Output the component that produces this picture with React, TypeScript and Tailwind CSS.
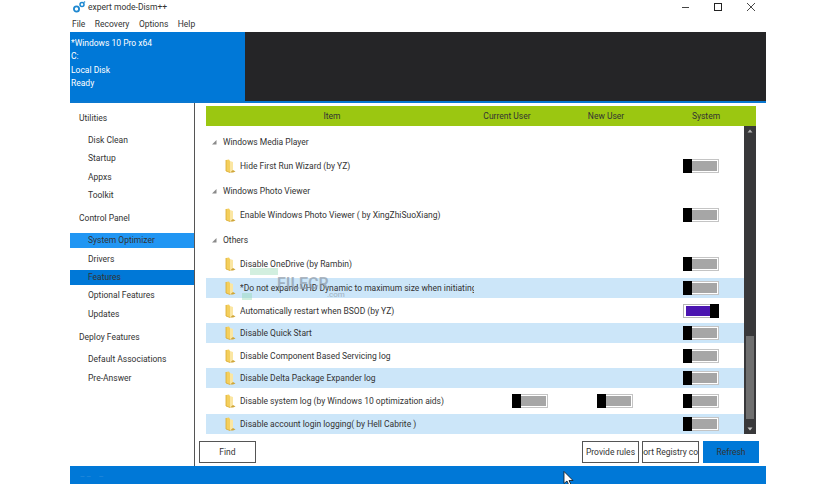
import React from "react";

const font = { fontFamily: 'Roboto, "Noto Sans", sans-serif' };

function Folder() {
  return (
    <svg width="11" height="14" viewBox="0 0 11 14" className="shrink-0">
      <path d="M1 1 L4 0.5 L5 2 L5 13.5 L1 12 Z" fill="#f4cf5d" />
      <path d="M5 2 L8 3 L8 13 L5 13.5 Z" fill="#fbe6a2" />
      <path d="M8 11 L10.5 12.5 L8 13.5 L5 13.5 Z" fill="#cfa63a" />
      <path d="M1 1 L1 12 L5 13.5" fill="none" stroke="#d9a92f" strokeWidth="0.8" />
    </svg>
  );
}

function Toggle({ on }: { on?: boolean }) {
  return on ? (
    <div className="w-[36px] h-[14px] flex items-center border border-[#b5b5b5] bg-white pl-[2px]">
      <div className="flex-1 h-[10px] bg-[#4a14b0]" />
      <div className="w-[9px] h-[14px] bg-black -mr-[1px]" />
    </div>
  ) : (
    <div className="w-[36px] h-[14px] flex items-center border border-[#c4c4c4] bg-white pr-[1px]">
      <div className="w-[9px] h-[14px] bg-black -ml-[1px]" />
      <div className="flex-1 h-[10px] bg-[#a6a6a6]" />
    </div>
  );
}

function Group({ label, h }: { label: string; h: string }) {
  return (
    <div className={`flex items-center pl-[5px] text-[8.5px] text-[#333] ${h}`}>
      <svg width="6" height="6" viewBox="0 0 6 6" className="mr-[6px]">
        <path d="M5.5 1 L5.5 5.5 L1 5.5 Z" fill="#8a8a8a" />
      </svg>
      <span className="pt-[1px]">{label}</span>
    </div>
  );
}

function Row({
  label,
  h,
  alt,
  on,
  users,
}: {
  label: string;
  h: string;
  alt?: boolean;
  on?: boolean;
  users?: boolean;
}) {
  return (
    <div className={`flex items-center text-[8.5px] text-[#333] ${h} ${alt ? "bg-[#cce6f9]" : ""}`}>
      <div className="w-[19px] shrink-0" />
      <Folder />
      <div className="ml-[4px] pt-[1px] w-[234px] shrink-0 whitespace-nowrap overflow-hidden">{label}</div>
      <div className="w-[74px] shrink-0 flex justify-end">{users && <Toggle />}</div>
      <div className="w-[85px] shrink-0 flex justify-end">{users && <Toggle />}</div>
      <div className="w-[86px] shrink-0 flex justify-end">
        <Toggle on={on} />
      </div>
    </div>
  );
}

function NavHead({ label, h }: { label: string; h: string }) {
  return <div className={`flex items-center pl-[9px] text-[8.5px] text-[#333] ${h}`}>{label}</div>;
}

function NavItem({ label, bg }: { label: string; bg?: string }) {
  return (
    <div className={`h-[15.6px] my-[1.4px] flex items-center pl-[18px] text-[8.5px] text-[#333] ${bg ?? ""}`}>
      {label}
    </div>
  );
}

function Btn({ label, w, primary }: { label: string; w: string; primary?: boolean }) {
  return (
    <div
      className={`h-[22px] flex items-center justify-center text-[8.5px] text-[#333] overflow-hidden whitespace-nowrap ${w} ${
        primary ? "bg-[#0078d7] border border-[#0078d7]" : "bg-white border border-[#555]"
      }`}
    >
      {label}
    </div>
  );
}

export default function App() {
  return (
    <div className="w-[836px] h-[484px] bg-white overflow-hidden relative" style={font}>
      <div className="ml-[70px] w-[696px] h-[484px] flex flex-col">
        {/* title bar */}
        <div className="h-[14px] flex items-center relative">
          <svg width="13" height="12" viewBox="0 0 13 12" className="ml-[3px]">
            <circle cx="3.5" cy="8" r="2.6" fill="none" stroke="#1e88d0" strokeWidth="1.8" />
            <circle cx="9" cy="3.5" r="2" fill="none" stroke="#1e88d0" strokeWidth="1.5" />
            <circle cx="11.5" cy="1" r="0.8" fill="#1e88d0" />
          </svg>
          <span className="ml-[2px] text-[8.5px] text-[#333]">expert mode-Dism++</span>
          <svg width="100" height="12" viewBox="0 0 100 12" className="absolute left-[606px] top-[1px]">
            <path d="M6 6.5 H13" stroke="#444" strokeWidth="1" />
            <rect x="38.5" y="2.5" width="7" height="7" fill="none" stroke="#222" strokeWidth="1" />
            <path d="M71 2 L79 10 M79 2 L71 10" stroke="#333" strokeWidth="0.9" />
          </svg>
        </div>
        {/* menu */}
        <div className="h-[18px] pt-[2px] flex items-center gap-[9.5px] pl-[2px] text-[8.5px] text-[#333]">
          <span>File</span>
          <span>Recovery</span>
          <span>Options</span>
          <span>Help</span>
        </div>
        {/* header */}
        <div className="h-[71px] flex border-b-[2px] border-[#0a78d0] shrink-0">
          <div className="w-[175px] bg-[#0078d7] text-white text-[8.5px] pt-[5px] pl-[1px] leading-[13.4px]">
            <div>*Windows 10 Pro x64</div>
            <div>C:</div>
            <div>Local Disk</div>
            <div>Ready</div>
          </div>
          <div className="flex-1 bg-[#252527]" />
        </div>
        {/* body */}
        <div className="flex-1 flex min-h-0">
          {/* sidebar */}
          <div className="w-[125px] border-r border-[#555] shrink-0 pt-[5px]">
            <NavHead label="Utilities" h="h-[21px]" />
            <div className="pt-[2px] flex flex-col">
              <NavItem label="Disk Clean" />
              <NavItem label="Startup" />
              <NavItem label="Appxs" />
              <NavItem label="Toolkit" />
            </div>
            <NavHead label="Control Panel" h="h-[27px]" />
            <div className="flex flex-col">
              <NavItem label="System Optimizer" bg="bg-[#2196f3]" />
              <NavItem label="Drivers" />
              <NavItem label="Features" bg="bg-[#0078d7]" />
              <NavItem label="Optional Features" />
              <NavItem label="Updates" />
            </div>
            <NavHead label="Deploy Features" h="h-[27px]" />
            <div className="flex flex-col">
              <NavItem label="Default Associations" />
              <NavItem label="Pre-Answer" />
            </div>
          </div>
          {/* main */}
          <div className="flex-1 flex flex-col min-w-0 pl-[11px] pr-[10px] pt-[3px]">
            <div className="h-[20px] bg-[#9bc711] flex items-center text-[8.5px] text-[#333] shrink-0">
              <div className="w-[252px] text-center">Item</div>
              <div className="w-[98px] text-center">Current User</div>
              <div className="w-[100px] text-center">New User</div>
              <div className="w-[100px] text-center">System</div>
            </div>
            <div className="flex h-[308px] shrink-0">
              <div className="flex-1 min-w-0 pt-[2px]">
                <Group label="Windows Media Player" h="h-[28px]" />
                <Row label="Hide First Run Wizard (by YZ)" h="h-[20px]" />
                <Group label="Windows Photo Viewer" h="h-[29px]" />
                <Row label="Enable Windows Photo Viewer ( by XingZhiSuoXiang)" h="h-[20px]" />
                <Group label="Others" h="h-[29px]" />
                <Row label="Disable OneDrive (by Rambin)" h="h-[20px] mb-[4px]" />
                <Row label="*Do not expand VHD Dynamic to maximum size when initiating" h="h-[20px]" alt />
                <Row label="Automatically restart when BSOD (by YZ)" h="h-[25px]" on />
                <Row label="Disable Quick Start" h="h-[20px]" alt />
                <Row label="Disable Component Based Servicing log" h="h-[25px]" />
                <Row label="Disable Delta Package Expander log" h="h-[20px]" alt />
                <Row label="Disable system log (by Windows 10 optimization aids)" h="h-[25px] mb-[1px]" users />
                <Row label="Disable account login logging( by Hell Cabrite )" h="h-[20px]" alt />
              </div>
              <div className="w-[12px] bg-[#38383a] flex flex-col items-center shrink-0 relative">
                <svg width="8" height="8" viewBox="0 0 8 8" className="mt-[1px]">
                  <path d="M1.5 5.5 L4 2.5 L6.5 5.5 Z" fill="#b5b5b5" />
                </svg>
                <div className="absolute left-[2px] right-[2px] top-[210px] bottom-[15px] bg-[#6f6f6f]" />
                <svg width="8" height="8" viewBox="0 0 8 8" className="absolute bottom-[1px]">
                  <path d="M1.5 2.5 L4 5.5 L6.5 2.5 Z" fill="#c5c5c5" />
                </svg>
              </div>
            </div>
            <div className="flex items-start pt-[7px] h-[32px] -ml-[7px] -mr-[3px]">
              <Btn label="Find" w="w-[57px]" />
              <div className="flex-1" />
              <div className="flex">
                <Btn label="Provide rules" w="w-[57px]" />
                <div className="h-[22px] w-[57px] ml-[3px] bg-white border border-[#555] flex items-center justify-center overflow-hidden whitespace-nowrap text-[8.5px] text-[#333]">
                  Import Registry config
                </div>
                <div className="ml-[4px]">
                  <Btn label="Refresh" w="w-[56px]" primary />
                </div>
              </div>
            </div>
          </div>
        </div>
        {/* status */}
        <div className="h-[18px] bg-[#0078d7] shrink-0 flex items-center pl-[10px] gap-[8px] text-[6px] text-[#3d95dc]">
          <span>— —</span>
          <span>—</span>
        </div>
      </div>

      {/* watermark */}
      <div className="absolute left-[277px] top-[276px] text-[16px] leading-[16px] font-semibold text-[#8c9aa8] opacity-70 pointer-events-none">
        FILECR
      </div>
      <div className="absolute left-[327px] top-[290px] text-[8px] leading-[9px] text-[#8c9aa8] opacity-70 pointer-events-none">
        .com
      </div>
      <div className="absolute left-[250px] top-[268px] w-[28px] h-[7px] bg-[#8fd6b0] opacity-40 pointer-events-none" />
      <div className="absolute left-[242px] top-[293px] w-[10px] h-[7px] bg-[#8fd6b0] opacity-40 pointer-events-none" />

      {/* cursor */}
      <svg width="12" height="16" viewBox="0 0 12 16" className="absolute left-[563px] top-[471px]">
        <path d="M1 0.5 V12.5 L4 10 L6 14.5 L8 13.5 L6 9.5 L10 9.5 Z" fill="#fff" stroke="#111" strokeWidth="0.8" />
      </svg>
    </div>
  );
}
